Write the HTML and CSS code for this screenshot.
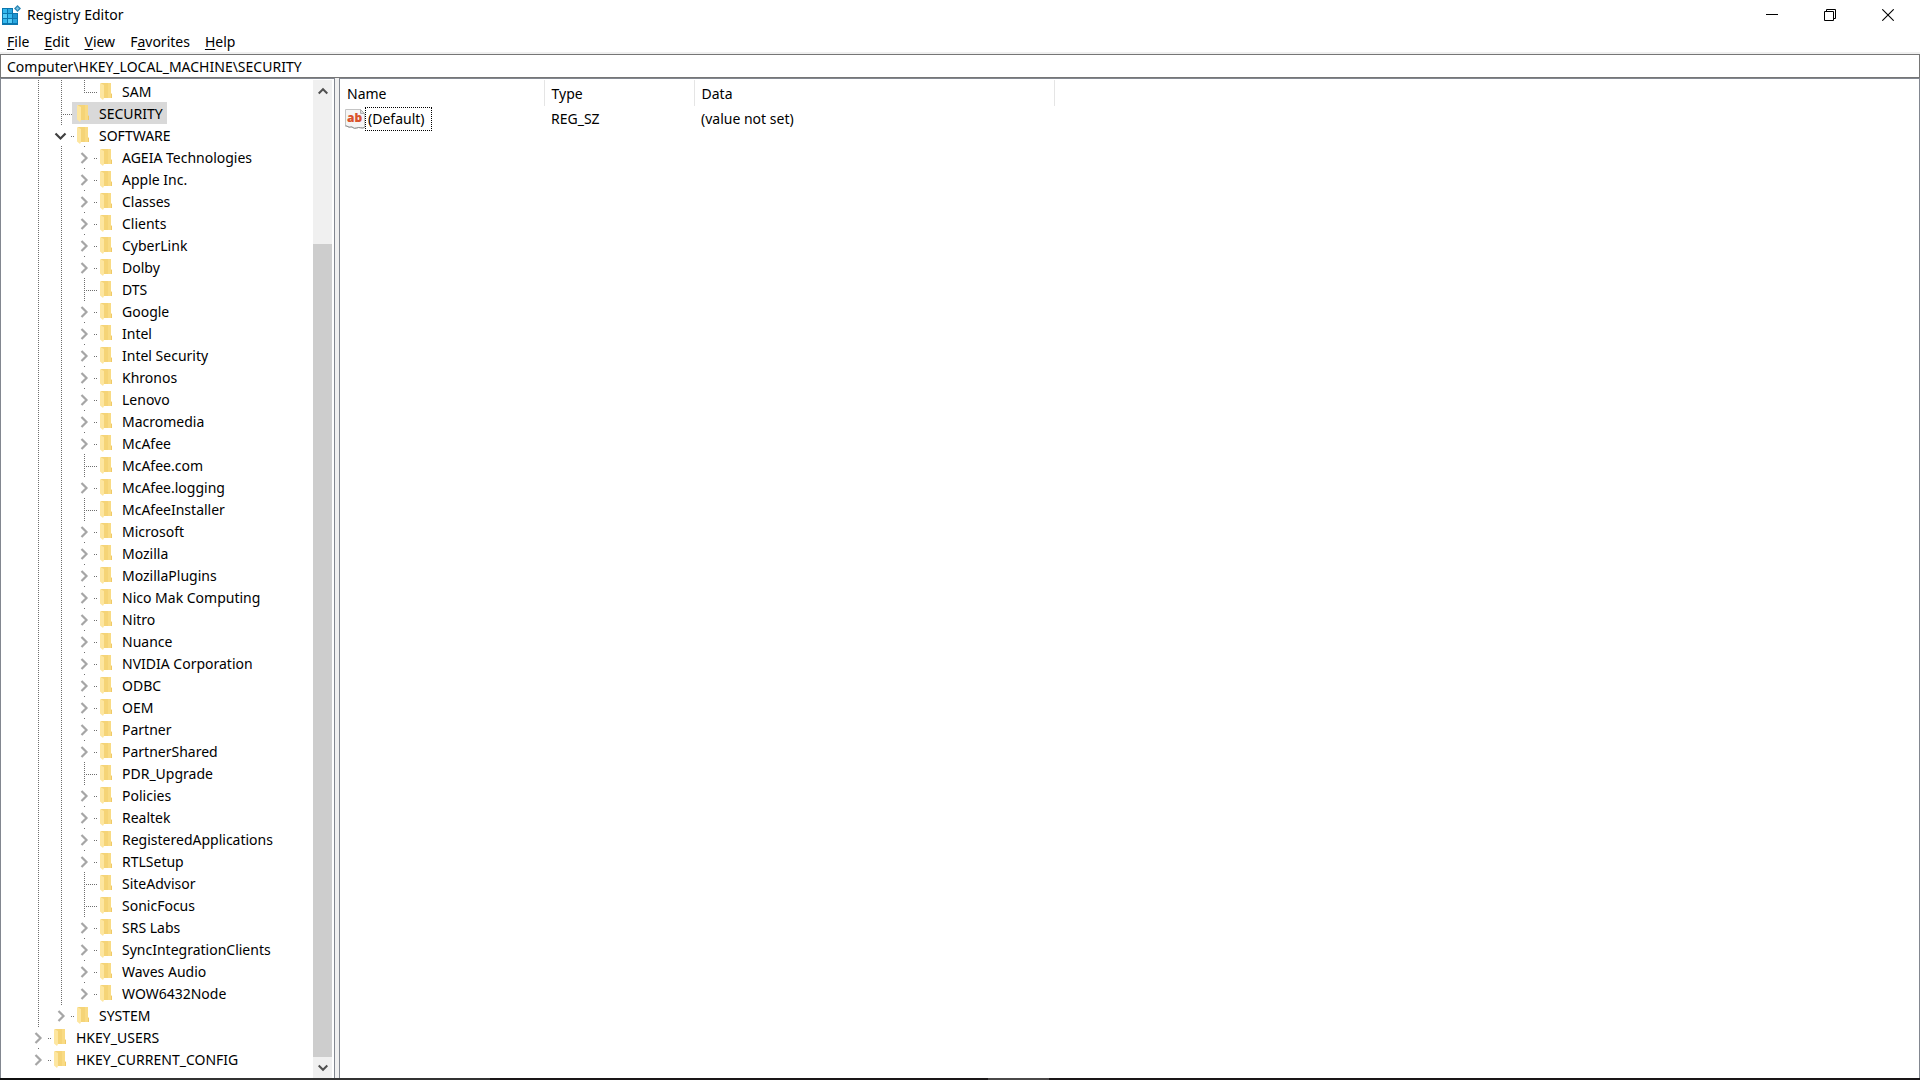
FILE: index.html
```html
<!DOCTYPE html>
<html lang="en">
<head>
    <meta charset="UTF-8">
    <meta name="viewport" content="width=device-width, initial-scale=1.0">
    <title>Registry Editor</title>
    <link rel="stylesheet" href="styles.css">
</head>
<body>

    <!-- Shared icons -->
    <svg class="sprite" aria-hidden="true">
        <symbol id="icon-folder" viewBox="0 0 12 17">
            <path d="M1 0h10v10.5h1v4.5h-9z" fill="#f5d477"/>
            <path d="M8 0h3v15h-3z" fill="#f9db84"/>
            <path d="M11 11h1v4h-1z" fill="#efc968"/>
            <path d="M0 0l4 2v13l-1 2-3-2.5z" fill="#fde6a0"/>
        </symbol>
        <symbol id="icon-right" viewBox="0 0 20 20">
            <path d="M7.5 6l5 5-5 5" fill="none" stroke="#a6a6a6" stroke-width="2.2"/>
        </symbol>
        <symbol id="icon-down" viewBox="0 0 20 20">
            <path d="M4.5 8.5l5 5 5-5" fill="none" stroke="#404040" stroke-width="2.2"/>
        </symbol>
    </svg>

    <div class="window">
        <header class="title-bar">
            <svg class="app-icon" width="20" height="20" viewBox="0 0 20 20" aria-hidden="true">
                <rect x="0" y="3" width="16" height="17" fill="#0b76ae"/>
                <rect x="1" y="4" width="4" height="4" fill="#35b8ee"/>
                <rect x="6" y="4" width="4" height="4" fill="#2aa7e0"/>
                <rect x="1" y="9" width="4" height="4" fill="#56ccf6"/>
                <rect x="6" y="9" width="4" height="4" fill="#35b8ee"/>
                <rect x="11" y="9" width="4" height="4" fill="#1d93cf"/>
                <rect x="1" y="14" width="4" height="4" fill="#35b8ee"/>
                <rect x="6" y="14" width="4" height="4" fill="#56ccf6"/>
                <rect x="11" y="14" width="4" height="4" fill="#2aa7e0"/>
                <path d="M11 1h9v7h-9z" fill="#fff"/>
                <path d="M15.5 0l3.5 3.5-3.5 3.5-3.5-3.5z" fill="#2c86b4"/>
                <path d="M15.5 1.8l1.7 1.7-1.7 1.7-1.7-1.7z" fill="#7cc3e2"/>
            </svg>
            <h1>Registry Editor</h1>
            <div class="window-controls">
                <button type="button" aria-label="Minimize">
                    <svg width="12" height="12" viewBox="0 0 12 12"><path d="M0 5.5h12" stroke="#000"/></svg>
                </button>
                <button type="button" aria-label="Restore">
                    <svg width="12" height="12" viewBox="0 0 12 12"><path d="M.5 2.5h9v9h-9zM2.5 2.5v-2h9v9h-2" fill="none" stroke="#000"/></svg>
                </button>
                <button type="button" aria-label="Close">
                    <svg width="12" height="12" viewBox="0 0 12 12"><path d="M.3 .3l11.4 11.4M11.7 .3L.3 11.7" stroke="#000" stroke-width="1.1"/></svg>
                </button>
            </div>
        </header>

        <nav class="menu-bar">
            <button type="button"><u>F</u>ile</button>
            <button type="button"><u>E</u>dit</button>
            <button type="button"><u>V</u>iew</button>
            <button type="button">F<u>a</u>vorites</button>
            <button type="button"><u>H</u>elp</button>
        </nav>

        <input class="address-bar" type="text" aria-label="Address" value="Computer\HKEY_LOCAL_MACHINE\SECURITY" spellcheck="false">

        <main class="panes">
            <section class="tree-pane">
                <ul class="tree" id="tree">
                    <!-- Rows are added by script.js -->
                </ul>
                <div class="scrollbar">
                    <button type="button" aria-label="Scroll up">
                        <svg width="10" height="8" viewBox="0 0 10 8"><path d="M.7 6.5L5 2.2l4.3 4.3" fill="none" stroke="#505050" stroke-width="2"/></svg>
                    </button>
                    <div class="track">
                        <div class="thumb"></div>
                    </div>
                    <button type="button" aria-label="Scroll down">
                        <svg width="10" height="8" viewBox="0 0 10 8"><path d="M.7 1.5L5 5.8l4.3-4.3" fill="none" stroke="#505050" stroke-width="2"/></svg>
                    </button>
                </div>
            </section>

            <section class="list-pane">
                <table class="values">
                    <thead>
                        <tr>
                            <th class="col-name">Name</th>
                            <th class="col-type">Type</th>
                            <th class="col-data">Data</th>
                        </tr>
                    </thead>
                    <tbody>
                        <tr>
                            <td>
                                <div class="value-name">
                                    <svg width="20" height="20" viewBox="0 0 20 20" aria-hidden="true">
                                        <path d="M.5 .5h15l4 4v14c-3 1.5-5-1-8 .5s-4-2-6-1-3-1.5-5-1z" fill="#f5f5f5" stroke="#c4c4c4"/>
                                        <path d="M15.5 .5l4 4h-4z" fill="#dcdcdc" stroke="#b0b0b0"/>
                                        <path d="M.5 17c2-.5 3 2 5 1s3 2.500 6 1 5 1 8-.5" fill="none" stroke="#8e8e8e"/>
                                        <text x="2" y="13" class="ab">ab</text>
                                    </svg>
                                    <span class="focused">(Default)</span>
                                </div>
                            </td>
                            <td>REG_SZ</td>
                            <td>(value not set)</td>
                        </tr>
                    </tbody>
                </table>
            </section>
        </main>

        <footer class="taskbar">
            <div class="start"></div>
            <div class="search"></div>
            <div class="active-task"></div>
        </footer>
    </div>

    <script src="script.js"></script>
</body>
</html>
```

FILE: styles.css
```css
* {
    box-sizing: border-box;
}

body {
    margin: 0;
    font-family: "Noto Sans", "Open Sans", sans-serif;
    font-size: 14px;
    line-height: 22px;
    color: #000;
    background-color: #fff;
}

button, input {
    font: inherit;
    color: inherit;
    border: none;
    padding: 0;
    background: none;
}

.sprite {
    display: none;
}

.window {
    display: flex;
    flex-direction: column;
    height: 100vh;
    overflow: hidden;
}

/* Title bar */
.title-bar {
    display: flex;
    align-items: center;
    height: 29px;
    padding: 0 3px 0 2px;
    flex-shrink: 0;
}

.title-bar h1 {
    margin: 0 0 0 5px;
    font-size: 14px;
    font-weight: normal;
}

.window-controls {
    display: flex;
    margin-left: auto;
}

.window-controls button {
    display: flex;
    align-items: center;
    justify-content: center;
    width: 58px;
    height: 28px;
}

/* Menu bar */
.menu-bar {
    display: flex;
    gap: 15px;
    height: 25px;
    padding: 2px 7px 0;
    border-bottom: 2px solid #f0f0f0;
    flex-shrink: 0;
}

.menu-bar button {
    height: 22px;
}

.menu-bar u {
    text-underline-offset: 2px;
}

/* Address bar */
.address-bar {
    width: 100%;
    height: 24px;
    padding: 0 6px;
    border: 1px solid #767676;
    flex-shrink: 0;
}

/* Panes */
.panes {
    display: flex;
    gap: 4px;
    flex: 1;
    min-height: 0;
    background-color: #f0f0f0;
}

.tree-pane {
    display: flex;
    width: 335px;
    padding-right: 2px;
    padding-top: 1px;
    border: 1px solid #828790;
    border-bottom: none;
    background-color: #fff;
}

.list-pane {
    flex: 1;
    padding-top: 1px;
    border: 1px solid #828790;
    border-bottom: none;
    background-color: #fff;
}

/* Tree */
.tree {
    flex: 1;
    margin: 0;
    padding: 0 0 0 25px;
    list-style: none;
    overflow: hidden;
}

.node {
    display: flex;
    height: 22px;
    line-height: 24px;
    white-space: nowrap;
}

.guide {
    display: flex;
    justify-content: center;
    width: 23px;
    height: 22px;
    flex-shrink: 0;
    background-repeat: no-repeat;
}

.line {
    background-image: repeating-linear-gradient(#6e6e6e 0 1px, transparent 1px 2px);
    background-size: 1px 22px;
    background-position: 12px 0;
}

.branch {
    background-image:
        repeating-linear-gradient(#6e6e6e 0 1px, transparent 1px 2px),
        repeating-linear-gradient(90deg, #6e6e6e 0 1px, transparent 1px 2px);
    background-size: 1px 22px, 11px 1px;
    background-position: 12px 0, 12px 12px;
}

.branch.last {
    background-size: 1px 12px, 11px 1px;
}

.toggle {
    width: 20px;
    height: 20px;
    margin-top: 1px;
    background-color: #fff;
}

.toggle svg {
    display: block;
    width: 20px;
    height: 20px;
}

.label {
    display: flex;
    gap: 10px;
    padding: 0 4px 0 5px;
    background: repeating-linear-gradient(90deg, transparent 0 1px, #6e6e6e 1px 2px) 0 12px / 2px 1px no-repeat;
}

.label svg {
    width: 12px;
    height: 17px;
    margin-top: 3px;
}

.selected .label {
    background: #d9d9d9;
}

/* Scrollbar */
.scrollbar {
    display: flex;
    flex-direction: column;
    width: 19px;
    background-color: #f0f0f0;
}

.scrollbar button {
    display: flex;
    align-items: center;
    justify-content: center;
    height: 21px;
}

.track {
    display: flex;
    flex-direction: column;
    justify-content: flex-end;
    flex: 1;
}

.thumb {
    height: 85%;
    background-color: #cdcdcd;
}

/* Values table */
.values {
    border-collapse: collapse;
    table-layout: fixed;
    width: 715px;
}

.values th {
    height: 26px;
    padding: 2px 0 0 7px;
    font-weight: normal;
    text-align: left;
    border-right: 1px solid #e5e5e5;
}

.values td {
    height: 26px;
    padding: 0 0 0 7px;
}

.values td:first-child {
    padding-left: 5px;
}

.col-name {
    width: 204px;
}

.col-type {
    width: 150px;
}

.value-name {
    display: flex;
    align-items: center;
}

.ab {
    font-family: "Open Sans", sans-serif;
    font-size: 12px;
    font-weight: 800;
    fill: #d9532c;
}

.focused {
    padding: 0 6px 0 2px;
    border: 1px dotted #000;
}

/* Taskbar edge */
.taskbar {
    display: flex;
    height: 2px;
    background-color: #1a1718;
    flex-shrink: 0;
}

.start {
    width: 60px;
    background-color: #101010;
}

.search {
    width: 430px;
    background-color: #333;
}

.active-task {
    width: 61px;
    margin-left: 498px;
    background-color: #4a4848;
}
```

FILE: script.js
```js
// Keys under HKEY_LOCAL_MACHINE\SOFTWARE
const software = [
    'AGEIA Technologies', 'Apple Inc.', 'Classes', 'Clients', 'CyberLink', 'Dolby', 'DTS',
    'Google', 'Intel', 'Intel Security', 'Khronos', 'Lenovo', 'Macromedia', 'McAfee',
    'McAfee.com', 'McAfee.logging', 'McAfeeInstaller', 'Microsoft', 'Mozilla',
    'MozillaPlugins', 'Nico Mak Computing', 'Nitro', 'Nuance', 'NVIDIA Corporation',
    'ODBC', 'OEM', 'Partner', 'PartnerShared', 'PDR_Upgrade', 'Policies', 'Realtek',
    'RegisteredApplications', 'RTLSetup', 'SiteAdvisor', 'SonicFocus', 'SRS Labs',
    'SyncIntegrationClients', 'Waves Audio', 'WOW6432Node'
];

// Keys without subkeys have no toggle
const leaves = ['DTS', 'McAfee.com', 'McAfeeInstaller', 'PDR_Upgrade', 'SiteAdvisor', 'SonicFocus'];

const nodes = [
    { name: 'SAM', level: 3, last: true },
    { name: 'SECURITY', level: 2, selected: true },
    { name: 'SOFTWARE', level: 2, toggle: 'down' },
    ...software.map(name => ({ name, level: 3, toggle: leaves.includes(name) ? null : 'right' })),
    { name: 'SYSTEM', level: 2, toggle: 'right', last: true },
    { name: 'HKEY_USERS', level: 1, toggle: 'right' },
    { name: 'HKEY_CURRENT_CONFIG', level: 1, toggle: 'right', last: true }
];

// Function to build one row of the tree
function createNode(node) {
    let html = '<span class="guide line"></span>'.repeat(node.level - 1);
    html += '<span class="guide branch' + (node.last ? ' last' : '') + '">';
    if (node.toggle) {
        html += '<button type="button" class="toggle" aria-label="Toggle ' + node.name + '">' +
            '<svg><use href="#icon-' + node.toggle + '"></use></svg></button>';
    }
    html += '</span><span class="label"><svg><use href="#icon-folder"></use></svg>' + node.name + '</span>';

    const row = document.createElement('li');
    row.className = node.selected ? 'node selected' : 'node';
    row.innerHTML = html;
    return row;
}

const tree = document.getElementById('tree');
nodes.forEach(node => tree.appendChild(createNode(node)));
```
